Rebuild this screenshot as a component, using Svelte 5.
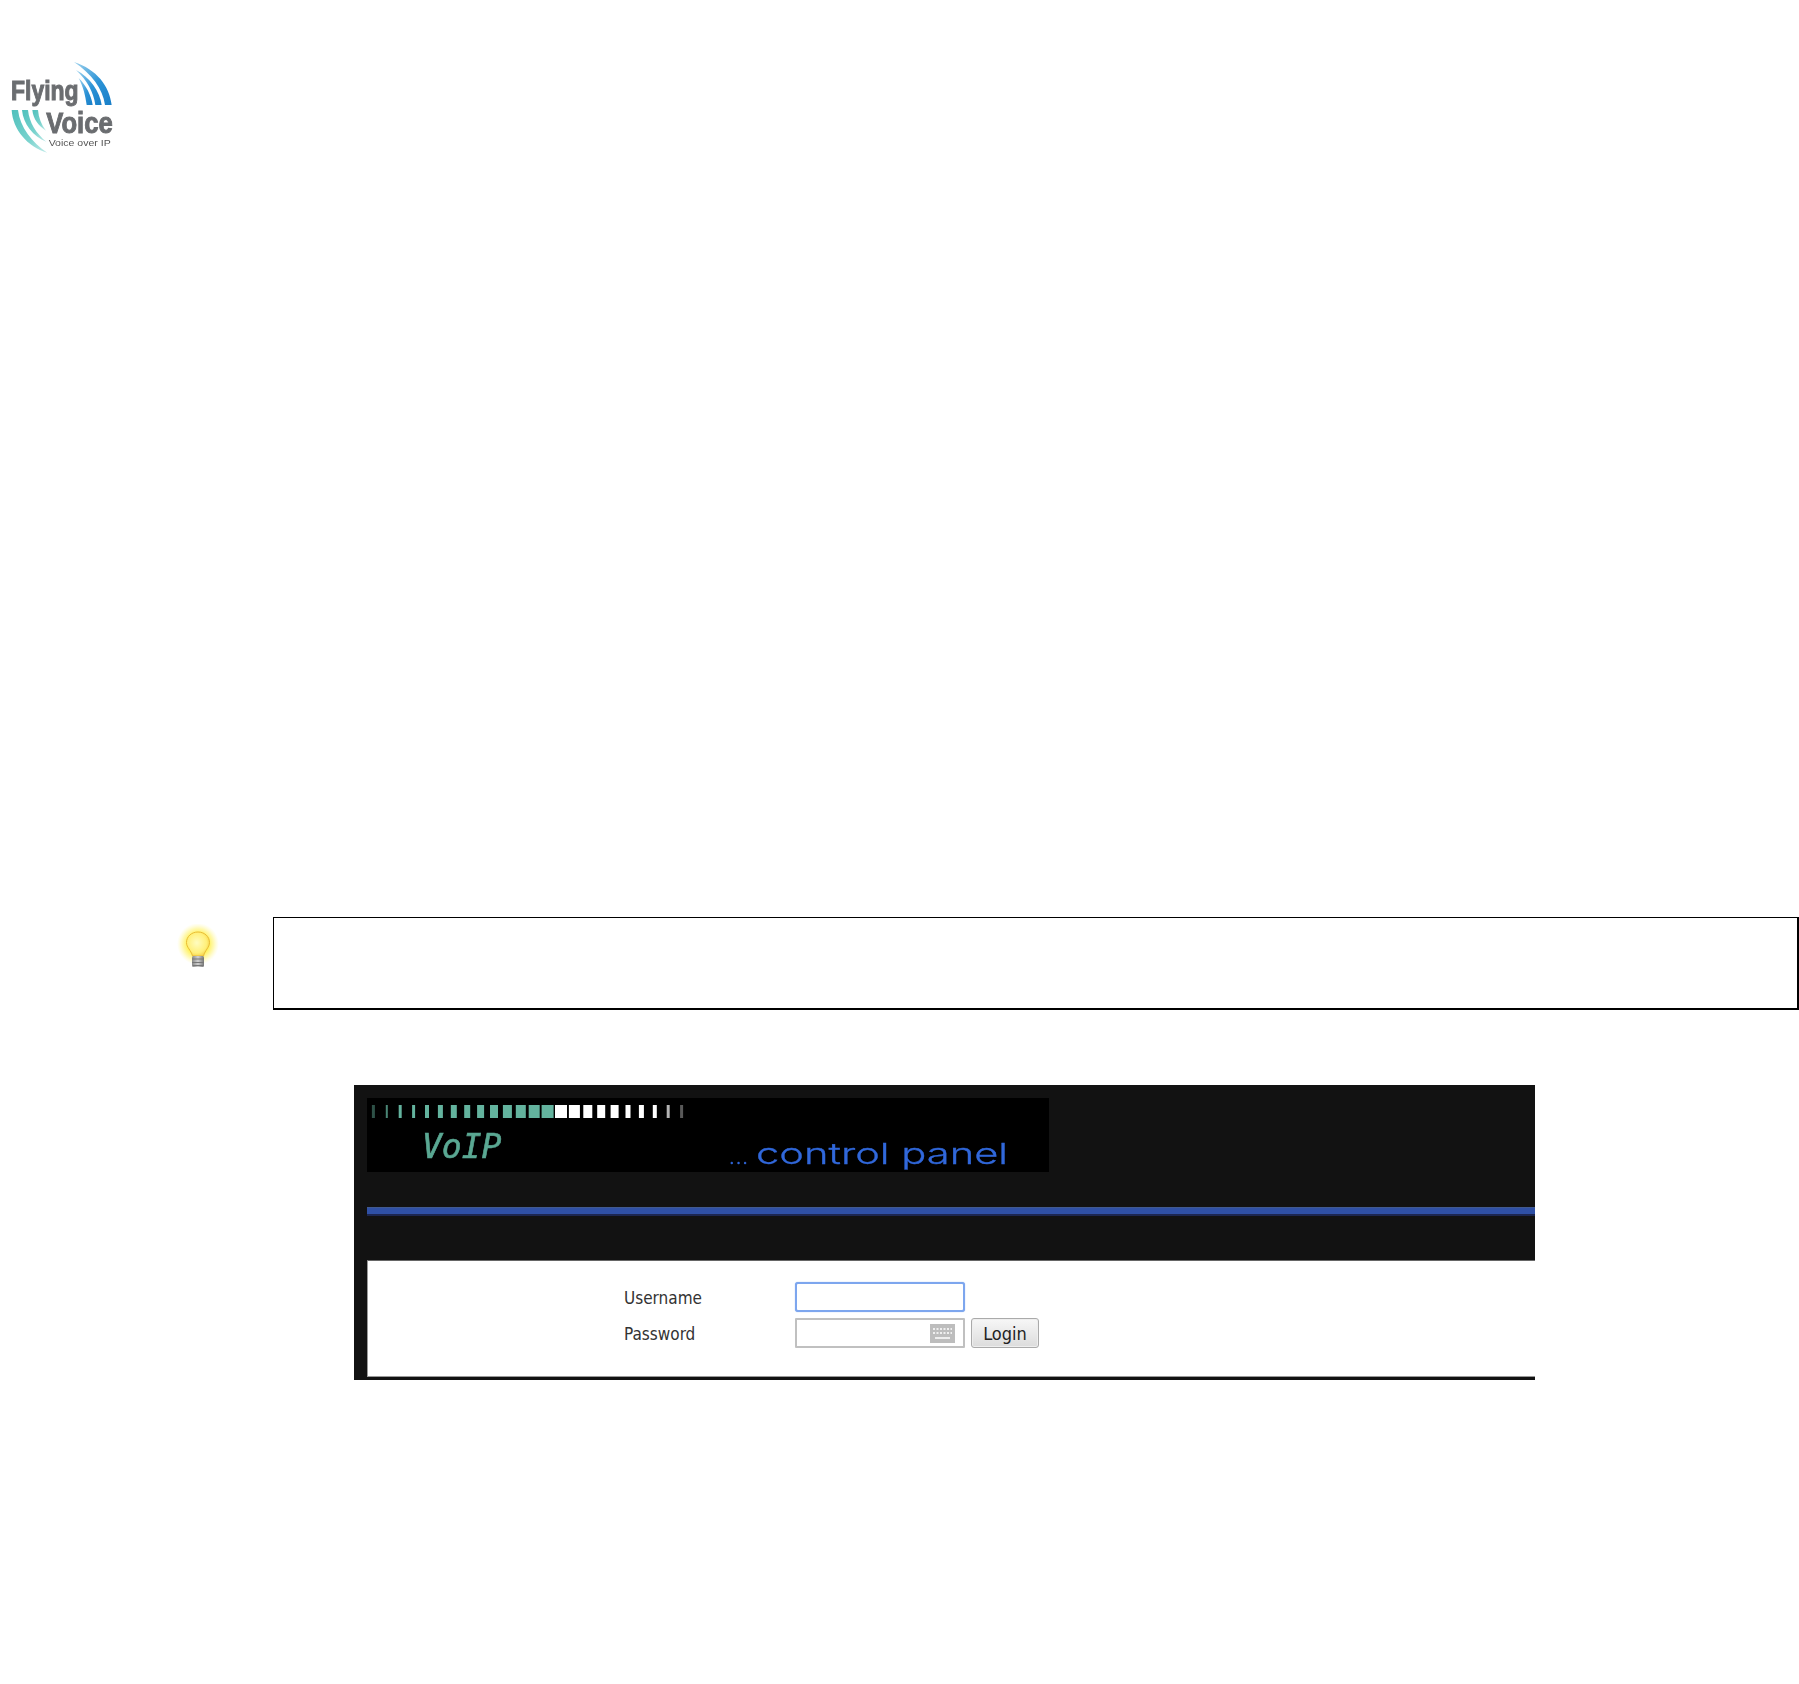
<script>
  const tealW = [3, 2, 3, 3, 4, 5, 6, 6, 7, 8, 9, 10, 11, 12];
  const whiteW = [12, 11, 9, 8, 8, 5, 5, 4, 3, 3];
  const pitch = 13.4;
  const first = 6.4;
  const segments = [
    ...tealW.map((w, i) => ({ w, color: '#64b39e', op: i === 0 ? 0.45 : i === 1 ? 0.75 : 1 })),
    ...whiteW.map((w, i) => ({ w, color: '#ffffff', op: i === 9 ? 0.35 : i === 8 ? 0.7 : 1 }))
  ].map((s, i) => ({ ...s, x: first + i * pitch - s.w / 2 }));
</script>

<div class="page">
  <svg class="logo" width="130" height="110" viewBox="0 0 390 330" role="img" aria-label="Flying Voice logo">
    <defs>
      <filter id="soft" x="-5%" y="-5%" width="110%" height="110%"><feGaussianBlur stdDeviation="1.6" /></filter>
      <linearGradient id="blueArc" x1="0" y1="0" x2="1" y2="1">
        <stop offset="0" stop-color="#9fd3ee" />
        <stop offset="0.55" stop-color="#2c93d6" />
        <stop offset="1" stop-color="#1a7fc8" />
      </linearGradient>
      <linearGradient id="tealArc" x1="0" y1="0" x2="1" y2="1">
        <stop offset="0" stop-color="#4fc0bc" />
        <stop offset="0.6" stop-color="#7ad3ce" />
        <stop offset="1" stop-color="#c4ecea" />
      </linearGradient>
    </defs>
    <g filter="url(#soft)">
      <path fill="url(#blueArc)" d="M222 36C290 58 328 108 335 165L315 165C308 115 275 72 222 36Z" />
      <path fill="url(#blueArc)" d="M228 60C270 82 300 125 305 165L286 165C280 125 262 92 228 60Z" />
      <path fill="url(#blueArc)" d="M236 84C258 106 274 136 278 165L260 165C256 136 250 112 236 84Z" />
      <path fill="url(#tealArc)" d="M35 180L54 180C60 232 96 278 142 308C82 290 38 238 35 180Z" />
      <path fill="url(#tealArc)" d="M66 180L84 180C88 218 108 250 140 276C98 258 70 222 66 180Z" />
      <path fill="url(#tealArc)" d="M97 180L114 180C116 204 124 224 138 242C116 228 100 208 97 180Z" />
      <text class="lg" x="33" y="150" font-size="82" textLength="203" lengthAdjust="spacingAndGlyphs">Flying</text>
      <text class="lg" x="139" y="249" font-size="90" textLength="199" lengthAdjust="spacingAndGlyphs">Voice</text>
      <text class="ls" x="146" y="288" font-size="28" textLength="186" lengthAdjust="spacingAndGlyphs">Voice over IP</text>
    </g>
  </svg>

  <div class="note-row">
    <svg class="bulb" width="44" height="54" viewBox="0 0 44 54" aria-hidden="true">
      <defs>
        <radialGradient id="glow">
          <stop offset="0.5" stop-color="#fff04a" stop-opacity="0.95" />
          <stop offset="0.75" stop-color="#fff36a" stop-opacity="0.5" />
          <stop offset="1" stop-color="#fff9a0" stop-opacity="0" />
        </radialGradient>
        <radialGradient id="glass" cx="0.45" cy="0.45" r="0.6">
          <stop offset="0" stop-color="#fffcc0" />
          <stop offset="0.7" stop-color="#fff07a" />
          <stop offset="1" stop-color="#f4d04a" />
        </radialGradient>
        <linearGradient id="base" x1="0" y1="0" x2="1" y2="0">
          <stop offset="0" stop-color="#888" />
          <stop offset="0.5" stop-color="#d0d0d0" />
          <stop offset="1" stop-color="#777" />
        </linearGradient>
      </defs>
      <circle cx="22" cy="20" r="21" fill="url(#glow)" />
      <path fill="url(#glass)" stroke="#e9bd36" stroke-width="1" d="M22 8C15.500 8 10.500 12.500 10.500 18.500C10.500 23.500 15 26 16.500 32L27.500 32C29 26 33.500 23.500 33.500 18.500C33.500 12.500 28.500 8 22 8Z" />
      <rect x="16" y="32" width="12" height="11" rx="1.500" fill="url(#base)" />
      <path stroke="#777" stroke-width="1" d="M16 35H28M16 38.500H28M17 41.500H27" />
    </svg>
    <div class="note"></div>
  </div>

  <section class="panel">
    <svg class="banner" width="682" height="74" viewBox="0 0 682 74" role="img" aria-label="VoIP control panel banner">
      <defs>
        <filter id="bannerSoft" x="-2%" y="-10%" width="104%" height="120%"><feGaussianBlur stdDeviation="0.7" /></filter>
      </defs>
      <rect width="682" height="74" fill="#000" />
      <g filter="url(#bannerSoft)">
        {#each segments as s}
          <rect x={s.x} y="7" width={s.w} height="13" fill={s.color} opacity={s.op} />
        {/each}
        <text class="voip" x="55" y="60">VoIP</text>
        <text class="dots" x="362" y="66">...</text>
        <text class="cp" x="389" y="66" textLength="252" lengthAdjust="spacingAndGlyphs">control panel</text>
      </g>
    </svg>

    <div class="rule"></div>

    <form class="form">
      <label for="user">Username</label>
      <input id="user" class="field focused" type="text" />
      <span></span>

      <label for="pass">Password</label>
      <div class="pass-wrap">
        <input id="pass" class="field" type="password" />
        <svg class="kbd" width="25" height="19" viewBox="0 0 25 19" aria-hidden="true">
          <rect width="25" height="19" fill="#bdbdbd" />
          <path stroke="#fff" stroke-width="1.500" stroke-dasharray="2 1.500" d="M3 5H22M3 9H22" />
          <path stroke="#fff" stroke-width="1.500" d="M5 14H20" />
        </svg>
      </div>
      <button type="button" class="login">Login</button>
    </form>
  </section>
</div>

<style>
  :global(body) {
    margin: 0;
    background: #fff;
  }

  .page {
    height: 1684px;
    overflow: hidden;
    font-family: "DejaVu Sans", Verdana, sans-serif;
    font-stretch: condensed;
  }

  .logo {
    display: block;
    margin-top: 50px;
  }

  .lg {
    font-family: "Liberation Sans", Arial, sans-serif;
    font-weight: 700;
    fill: #6b6d70;
    stroke: #6b6d70;
    stroke-width: 3px;
  }

  .ls {
    font-family: "Liberation Sans", Arial, sans-serif;
    fill: #555;
  }

  .note-row {
    display: flex;
    align-items: flex-start;
    margin-top: 757px;
    padding-left: 176px;
  }

  .bulb {
    display: block;
    flex: none;
    margin-top: 7px;
    margin-right: 53px;
  }

  .note {
    flex: none;
    box-sizing: border-box;
    width: 1526px;
    height: 93px;
    border: solid #000;
    border-width: 1px 2px 2px 1.500px;
  }

  .panel {
    box-sizing: border-box;
    width: 1181px;
    height: 295px;
    margin: 75px 0 0 354px;
    padding: 13px 0 3px 13px;
    background: #121212;
    display: flex;
    flex-direction: column;
  }

  .banner {
    display: block;
    flex: none;
  }

  .voip {
    font-family: "DejaVu Sans Mono", monospace;
    font-stretch: normal;
    font-style: italic;
    font-size: 33px;
    fill: #5aa893;
    stroke: #5aa893;
    stroke-width: 0.6px;
  }

  .dots, .cp {
    font-family: Inter, sans-serif;
    font-stretch: normal;
    font-weight: 300;
    font-size: 29px;
    fill: #3067da;
    stroke: #3067da;
    stroke-width: 0.3px;
  }

  .dots {
    font-size: 20px;
    letter-spacing: 1px;
  }

  .rule {
    flex: none;
    box-sizing: border-box;
    height: 9px;
    margin-top: 35px;
    background: #2f50a5;
    border-top: 1px solid #41598f;
    border-bottom: 2px solid #1c2650;
  }

  .form {
    flex: 1;
    box-sizing: border-box;
    margin-top: 44px;
    padding: 21px 0 0 256px;
    background: #fff;
    border: solid #999;
    border-width: 1px 0 1px 1px;
    border-top-color: #666;
    display: grid;
    grid-template-columns: 171px 170px 75px;
    grid-auto-rows: 30px;
    row-gap: 6px;
    align-items: center;
    align-content: start;
    font-size: 17px;
    color: #333;
  }

  label {
    padding-top: 2px;
  }

  .field {
    display: block;
    box-sizing: border-box;
    width: 170px;
    height: 30px;
    margin: 0;
    padding: 0 4px;
    background: #fff;
    border: 2px solid #c0c0c0;
    border-radius: 1px;
    outline: none;
  }

  .focused {
    border-color: #7da6ee;
    border-radius: 3px;
    box-shadow: 0 0 1px #7da6ee;
  }

  .pass-wrap {
    position: relative;
    height: 30px;
  }

  .kbd {
    position: absolute;
    top: 6px;
    left: 135px;
  }

  .login {
    box-sizing: border-box;
    width: 68px;
    height: 30px;
    margin: 0 0 0 6px;
    padding: 0;
    font: 18px "DejaVu Sans", Verdana, sans-serif;
    font-stretch: condensed;
    color: #222;
    background: linear-gradient(#f7f7f7, #dcdcdc);
    border: 1px solid #aaa;
    border-radius: 3px;
    box-shadow: inset 0 0 0 1px #eee;
  }
</style>
